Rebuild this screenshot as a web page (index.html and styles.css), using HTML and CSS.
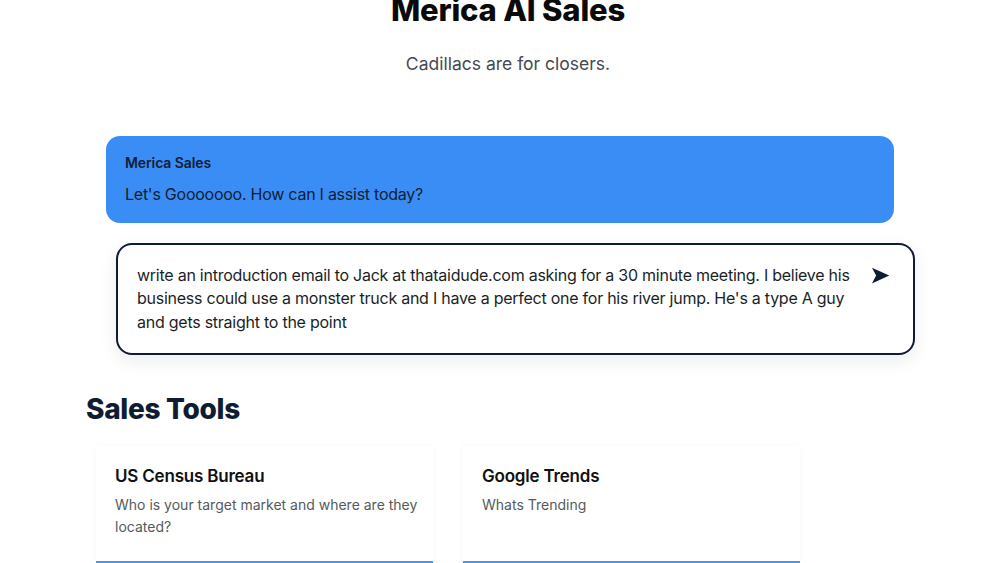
FILE: index.html
```html
<!DOCTYPE html>
<html lang="en">
<head>
<meta charset="utf-8">
<title>Merica AI Sales</title>
<link rel="stylesheet" href="styles.css">
</head>
<body>
<main class="page">
  <header class="hero">
    <h1 class="hero-title">Merica AI Sales</h1>
    <p class="hero-sub">Cadillacs are for closers.</p>
  </header>

  <section class="chat">
    <div class="bubble">
      <div class="bubble-name">Merica Sales</div>
      <div class="bubble-text">Let's Gooooooo. How can I assist today?</div>
    </div>

    <form class="composer">
      <div class="composer-text">write an introduction email to Jack at thataidude.com asking for a 30 minute meeting. I believe his business could use a monster truck and I have a perfect one for his river jump. He's a type A guy and gets straight to the point</div>
      <button class="send" type="button" aria-label="Send">
        <svg viewBox="0 0 24 24" width="21" height="21"><path d="M2.2 3 L22 12 L2.2 21 L7 12 Z" fill="#0f1d33"/></svg>
      </button>
    </form>
  </section>

  <section class="tools">
    <h2 class="tools-title">Sales Tools</h2>
    <div class="tool-grid">
      <article class="tool-card">
        <h3 class="tool-name">US Census Bureau</h3>
        <p class="tool-desc">Who is your target market and where are they located?</p>
      </article>
      <article class="tool-card">
        <h3 class="tool-name">Google Trends</h3>
        <p class="tool-desc">Whats Trending</p>
      </article>
    </div>
  </section>
</main>
</body>
</html>
```

FILE: styles.css
```css
* { box-sizing: border-box; }

html, body {
  margin: 0;
  padding: 0;
  background: #ffffff;
  overflow: hidden;
}

body {
  font-family: Inter, "Noto Sans", sans-serif;
  color: #0f1d33;
}

.page {
  display: flex;
  flex-direction: column;
}

.hero {
  display: flex;
  flex-direction: column;
  align-items: center;
  margin-top: -10px;
  padding-left: 16px;
}

.hero-title {
  margin: 0;
  font-size: 31px;
  line-height: 40px;
  font-weight: 800;
  color: #0a0a0a;
  letter-spacing: -0.2px;
}

.hero-sub {
  margin: 21px 0 0;
  font-size: 17.5px;
  line-height: 26px;
  color: #444a52;
}

.chat {
  display: flex;
  flex-direction: column;
  margin-top: 59px;
}

.bubble {
  margin-left: 106px;
  width: 788px;
  height: 87px;
  padding: 18px 19px;
  background: #3a8df5;
  border-radius: 14px;
}

.bubble-name {
  font-size: 14px;
  line-height: 18px;
  font-weight: 600;
  color: #0f1d33;
  letter-spacing: -0.1px;
}

.bubble-text {
  margin-top: 11px;
  font-size: 16px;
  line-height: 22px;
  color: #0f1d33;
  letter-spacing: -0.25px;
}

.composer {
  margin: 20px 0 0 116px;
  width: 799px;
  height: 112px;
  display: flex;
  align-items: flex-start;
  gap: 12px;
  padding: 19px 22px 0 19px;
  border: 2px solid #0f1d33;
  border-radius: 16px;
  background: #fff;
  box-shadow: 0 6px 18px rgba(15, 29, 51, 0.08);
}

.composer-text {
  flex: 1;
  font-size: 16px;
  line-height: 23.4px;
  color: #1a1f27;
  letter-spacing: -0.25px;
}

.send {
  flex: none;
  margin-top: 1px;
  padding: 0;
  border: 0;
  background: none;
  display: flex;
}

.tools {
  display: flex;
  flex-direction: column;
  margin-top: 36px;
}

.tools-title {
  margin: 0 0 0 86px;
  font-size: 28px;
  line-height: 36px;
  font-weight: 800;
  color: #0f1d33;
  letter-spacing: -0.3px;
}

.tool-grid {
  display: flex;
  gap: 30px;
  margin: 19px 0 0 96px;
}

.tool-card {
  width: 337px;
  height: 118px;
  padding: 18px 10px 0 19px;
  background: #fff;
  border-bottom: 3px solid #4a94ec;
  box-shadow: 0 0 8px rgba(0, 0, 0, 0.035);
}

.tool-name {
  margin: 0;
  font-size: 17px;
  line-height: 24px;
  font-weight: 600;
  color: #111;
  letter-spacing: -0.2px;
}

.tool-desc {
  margin: 6px 0 0;
  font-size: 14px;
  line-height: 22px;
  color: #555a60;
}
```
